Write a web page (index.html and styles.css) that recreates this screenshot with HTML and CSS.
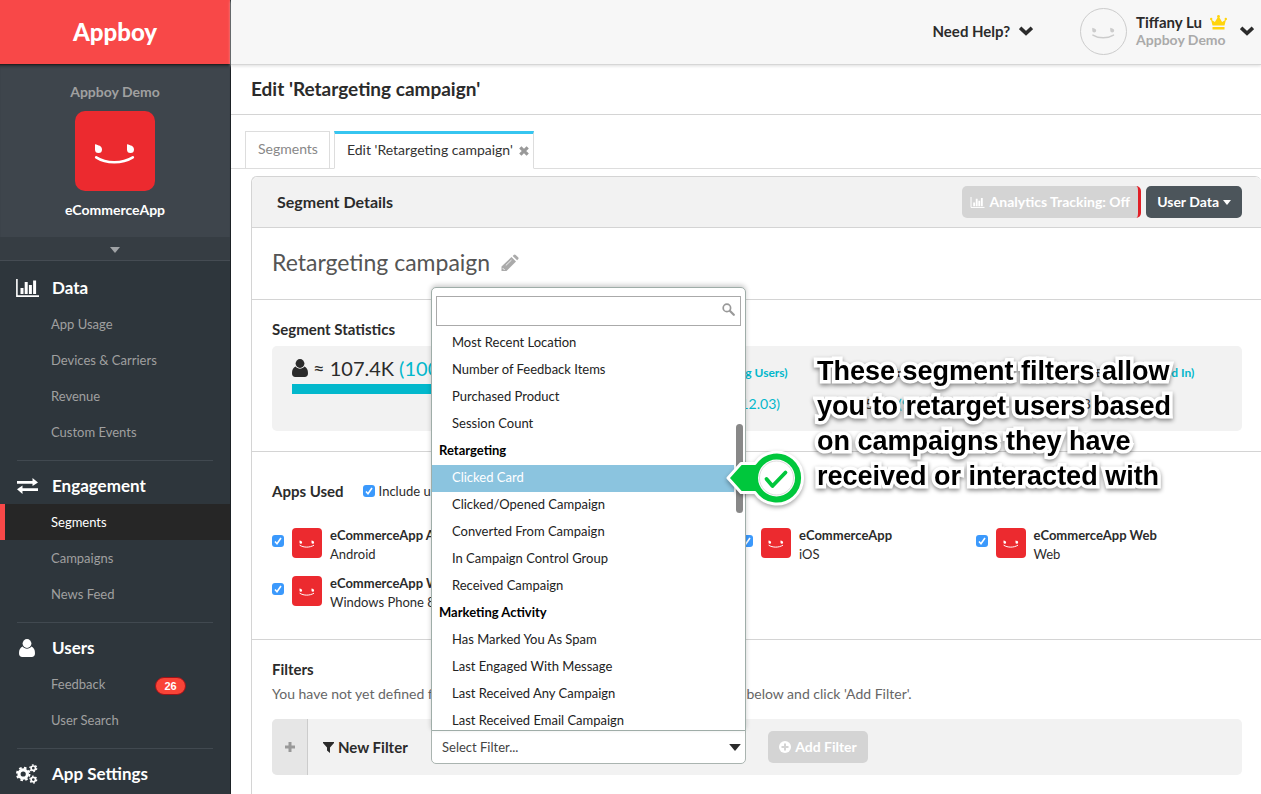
FILE: index.html
```html
<!DOCTYPE html>
<html lang="en">
<head>
<meta charset="utf-8">
<title>Edit 'Retargeting campaign'</title>
<link rel="stylesheet" href="styles.css">
</head>
<body>
<svg class="defs" aria-hidden="true">
  <symbol id="i-chart" viewBox="0 0 23 18"><path d="M.9 0v17.1H23" fill="none" stroke="currentColor" stroke-width="1.6"/><path d="M4.500 9h3v6h-3zM8.700 3h3v12h-3zM12.900 6h3v9h-3zM17.100 1.500h3V15h-3z" fill="currentColor"/></symbol>
  <symbol id="i-user" viewBox="0 0 16 18"><circle cx="8" cy="4.500" r="4.400" fill="currentColor"/><path d="M3.600 7.600C1.200 8.300 0 11 0 14.300 0 16.800 1.400 18 3.200 18h9.600c1.800 0 3.200-1.200 3.200-3.700 0-3.300-1.200-6-3.600-6.700C11.300 9 9.800 9.700 8 9.700S4.700 9 3.600 7.600z" fill="currentColor"/></symbol>
  <symbol id="i-face" viewBox="0 0 80 80"><path d="M20 33.200c3.500 1 7 1.600 7 5.200a3.500 3.500 0 0 1-7 0zM52 33.200c3.500 1 7 1.600 7 5.200a3.500 3.500 0 0 1-7 0z" fill="currentColor"/><path d="M21.200 46.300c10 6.500 26 6.500 36.600 0" fill="none" stroke="currentColor" stroke-width="2.600" stroke-linecap="round"/></symbol>
  <symbol id="i-chevron" viewBox="0 0 12 8"><path d="M1 1.300 6 6l5-4.700" fill="none" stroke="currentColor" stroke-width="3"/></symbol>
  <symbol id="i-caret" viewBox="0 0 10 6"><path d="M0 0h10L5 6z" fill="currentColor"/></symbol>
</svg>

<div class="page">
  <aside class="sidebar">
    <a class="brand" href="#">Appboy</a>
    <div class="org">
      <span class="org-name">Appboy Demo</span>
      <svg class="org-logo"><use href="#i-face"/></svg>
      <strong class="app-name">eCommerceApp</strong>
    </div>
    <button class="org-toggle" aria-label="Switch app"><svg><use href="#i-caret"/></svg></button>
    <nav class="nav">
      <section class="nav-group">
        <h2><svg width="23" height="18"><use href="#i-chart"/></svg>Data</h2>
        <a href="#">App Usage</a><a href="#">Devices &amp; Carriers</a><a href="#">Revenue</a><a href="#">Custom Events</a>
      </section>
      <section class="nav-group">
        <h2><svg width="21" height="16" viewBox="0 0 21 16"><path d="M0 3h15.500V0L21 4.500 15.500 8V5.800H0zM21 13H5.500v3L0 11.300 5.500 7.500v2.700H21z" fill="currentColor"/></svg>Engagement</h2>
        <a class="active" href="#">Segments</a><a href="#">Campaigns</a><a href="#">News Feed</a>
      </section>
      <section class="nav-group">
        <h2><svg width="16" height="18"><use href="#i-user"/></svg>Users</h2>
        <a href="#">Feedback <span class="badge">26</span></a><a href="#">User Search</a>
      </section>
      <section class="nav-group">
        <h2><svg width="22" height="20" viewBox="0 0 22 20"><g fill="none" stroke="currentColor"><circle cx="7.200" cy="10" r="4.200" stroke-width="3.200"/><circle cx="7.200" cy="10" r="6.300" stroke-width="1.900" stroke-dasharray="2.600 2.350"/><circle cx="17.300" cy="4.200" r="2.200" stroke-width="1.700"/><circle cx="17.300" cy="4.200" r="3.400" stroke-width="1.300" stroke-dasharray="1.700 1.860"/><circle cx="17.300" cy="15.600" r="2.200" stroke-width="1.700"/><circle cx="17.300" cy="15.600" r="3.400" stroke-width="1.300" stroke-dasharray="1.700 1.860"/></g></svg>App Settings</h2>
      </section>
    </nav>
  </aside>

  <div class="content">
    <header class="topbar">
      <button class="help">Need Help? <svg class="chevron"><use href="#i-chevron"/></svg></button>
      <button class="account">
        <svg class="avatar"><use href="#i-face"/></svg>
        <span class="who">
          <span class="who-name">Tiffany Lu <svg width="17" height="15" viewBox="0 0 17 15"><path d="M2.500 10.500 1 4.500l3.900 2.400L8.500 1l3.600 5.900L16 4.500l-1.500 6zM2.500 12h12v2.500h-12z" fill="currentColor"/><circle cx="1.200" cy="4" r="1.200" fill="currentColor"/><circle cx="8.500" cy="1.400" r="1.400" fill="currentColor"/><circle cx="15.800" cy="4" r="1.200" fill="currentColor"/></svg></span>
          <span class="who-org">Appboy Demo</span>
        </span>
        <svg class="chevron"><use href="#i-chevron"/></svg>
      </button>
    </header>
    <h1 class="title">Edit 'Retargeting campaign'</h1>

    <div class="tabs">
      <a class="tab" href="#">Segments</a>
      <a class="tab current" href="#">Edit 'Retargeting campaign' <svg width="10" height="10" viewBox="0 0 10 10"><path d="M1.300 1.300l7.400 7.400M8.700 1.300 1.300 8.700" stroke="currentColor" stroke-width="3.200"/></svg></a>
    </div>

    <main class="panel">
      <header class="panel-head">
        <h2>Segment Details</h2>
        <button class="btn muted tracking" disabled><svg width="15" height="11"><use href="#i-chart"/></svg>Analytics Tracking: Off</button>
        <button class="btn dark">User Data<svg width="8" height="5"><use href="#i-caret"/></svg></button>
      </header>

      <section class="segment-name">
        <span>Retargeting campaign</span>
        <button aria-label="Rename"><svg width="18" height="18" viewBox="0 0 18 18"><path d="M.5 12.500 10.500 3l4.500 4.500L5.500 17H.5zM11.700 1.900l1-1q1-1 2 0l2.400 2.400q1 1 0 2l-1 1z" fill="currentColor"/><path d="M4.800 11.500 10.500 6" stroke="#fff" stroke-width=".8"/><path d="M1.800 14.200l1.700 1.700" stroke="#fff" stroke-width="1"/></svg></button>
      </section>

      <section class="stats">
        <h3>Segment Statistics</h3>
        <div class="stats-box">
          <div class="total">
            <div class="total-line"><svg width="16" height="18"><use href="#i-user"/></svg>≈ 107.4K <em>(100%)</em></div>
            <div class="bar"></div>
          </div>
          <div class="stat"><b>Lifetime Revenue <em>(All Paying Users)</em></b><span>$1,024.1K <em>(Average $12.03)</em></span></div>
          <div class="stat"><b>Email</b><span>5.2K <em>(93.4%)</em></span></div>
          <div class="stat"><b>Web Push Enabled <em>(Opted In)</em></b><span>3K <em>(28.1%)</em></span></div>
        </div>
      </section>

      <section class="apps">
        <div class="apps-head">
          <h3>Apps Used</h3>
          <label><input type="checkbox" checked>Include users from all apps</label>
        </div>
        <div class="app-grid">
          <label class="app"><input type="checkbox" checked><svg><use href="#i-face"/></svg><span><b>eCommerceApp Android</b>Android</span></label>
          <label class="app"><input type="checkbox" checked><svg><use href="#i-face"/></svg><span><b>eCommerceApp</b>Kindle</span></label>
          <label class="app"><input type="checkbox" checked><svg><use href="#i-face"/></svg><span><b>eCommerceApp</b>iOS</span></label>
          <label class="app"><input type="checkbox" checked><svg><use href="#i-face"/></svg><span><b>eCommerceApp Web</b>Web</span></label>
          <label class="app"><input type="checkbox" checked><svg><use href="#i-face"/></svg><span><b>eCommerceApp Windows</b>Windows Phone 8</span></label>
        </div>
      </section>

      <section class="filters">
        <h3>Filters</h3>
        <p>You have not yet defined filters for this segment. Please pick a filter in the list below and click 'Add Filter'.</p>
        <div class="filter-row">
          <button class="plus" aria-label="Add group"><svg width="10" height="10" viewBox="0 0 10 10"><path d="M5 0v10M0 5h10" stroke="currentColor" stroke-width="3"/></svg></button>
          <label class="filter-label" for="filter"><svg width="11" height="11" viewBox="0 0 11 11"><path d="M0 0h11v1L7 5.500V11L4 8.500v-3L0 1z" fill="currentColor"/></svg>New Filter</label>
          <div class="picker">
            <select id="filter"><option>Select Filter...</option></select>
            <svg class="picker-caret"><use href="#i-caret"/></svg>
            <div class="menu">
              <div class="search">
                <input type="text" aria-label="Search filters">
                <svg width="13" height="13" viewBox="0 0 13 13"><circle cx="4.900" cy="4.900" r="3.700" fill="none" stroke="currentColor" stroke-width="1.700"/><path d="M7.800 7.800l4 4" stroke="currentColor" stroke-width="2.200" stroke-linecap="round"/></svg>
              </div>
              <ul class="options">
                <li>Most Recent Location</li>
                <li>Number of Feedback Items</li>
                <li>Purchased Product</li>
                <li>Session Count</li>
                <li class="group">Retargeting</li>
                <li class="hover">Clicked Card</li>
                <li>Clicked/Opened Campaign</li>
                <li>Converted From Campaign</li>
                <li>In Campaign Control Group</li>
                <li>Received Campaign</li>
                <li class="group">Marketing Activity</li>
                <li>Has Marked You As Spam</li>
                <li>Last Engaged With Message</li>
                <li>Last Received Any Campaign</li>
                <li>Last Received Email Campaign</li>
              </ul>
              <div class="thumb"></div>
              <div class="note">
                <svg width="84" height="64" viewBox="0 0 84 64"><path d="M5 32 18 17.500H32a26 26 0 1 1 0 29H18z" fill="#00c73c" stroke="#fff" stroke-width="3" stroke-linejoin="round"/><circle cx="53.500" cy="32" r="18.500" fill="#fff"/><circle cx="53.500" cy="32" r="17" fill="none" stroke="#ddd" stroke-width="1"/><path d="M43.500 33l6 7 13-13.500" fill="none" stroke="#00c73c" stroke-width="3.800" stroke-linecap="round" stroke-linejoin="round"/></svg>
                <p>These segment filters allow<br>you to retarget users based<br>on campaigns they have<br>received or interacted with</p>
              </div>
            </div>
          </div>
          <button class="btn muted add" disabled><svg width="12" height="12" viewBox="0 0 12 12"><circle cx="6" cy="6" r="6" fill="currentColor"/><path d="M6 2.500v7M2.500 6h7" stroke="#d4d4d4" stroke-width="2"/></svg>Add Filter</button>
        </div>
      </section>
    </main>
  </div>
</div>
</body>
</html>
```
FILE: styles.css
```css
* { box-sizing: border-box; }
body { margin: 0; font-family: Lato, "Open Sans", sans-serif; font-size: 14px; line-height: 20px; color: #2b2b2b; background: #fff; overflow: hidden; }
h1, h2, h3, p, ul { margin: 0; padding: 0; }
ul { list-style: none; }
a { color: inherit; text-decoration: none; }
em { font-style: normal; color: #02b8cc; }
button, input, select { font: inherit; color: inherit; }
button { border: 0; padding: 0; background: none; }
svg { flex: none; }
input[type="checkbox"] { width: 12px; height: 12px; margin: 0; flex: none; appearance: none; border-radius: 3px; background: #3b99fc; }
input[type="checkbox"]:checked { background: #3b99fc url("data:image/svg+xml,%3Csvg xmlns='http://www.w3.org/2000/svg' viewBox='0 0 12 12'%3E%3Cpath d='M3 6.500l2 2.300L9 3' fill='none' stroke='white' stroke-width='1.600'/%3E%3C/svg%3E"); }
.defs { position: absolute; width: 0; height: 0; }
.page { display: flex; min-height: 100vh; }

.sidebar { flex: none; width: 231px; height: 100vh; overflow: hidden; background: #2e363c; border-right: 1px solid #1d2226; color: #fff; }
.brand { display: flex; align-items: center; justify-content: center; height: 65px; background: #f84848; border-bottom: 1px solid #222; font-size: 24px; font-weight: 900; }
.org { display: flex; flex-direction: column; align-items: center; height: 172px; padding-top: 17px; background: #3e454c; box-shadow: inset 0 3px 3px -2px #23282c; }
.org-name { color: #a0a0a0; font-weight: 700; }
.org-logo { width: 80px; height: 80px; margin: 9px 0; background: #ec2a2f; border-radius: 10px; }
.app-name { font-weight: 700; }
.org-toggle { display: flex; align-items: center; justify-content: center; width: 100%; height: 24px; background: #363d43; border-bottom: 1px solid #454c53; color: #a0a3a6; }
.org-toggle svg { width: 10px; height: 6px; margin-top: 3px; }
.nav-group { padding: 9px 0 10px; position: relative; }
.nav-group + .nav-group { padding-top: 8px; }
.nav-group + .nav-group::before { content: ""; position: absolute; top: 0; left: 17px; right: 17px; height: 1px; background: #414950; }
.nav-group h2 { display: grid; grid-template-columns: 24px 1fr; gap: 13px; align-items: center; justify-items: start; height: 36px; padding-left: 15px; font-size: 17px; font-weight: 700; }
.nav-group h2 svg { justify-self: center; }
.nav-group a { display: flex; align-items: center; height: 36px; padding-left: 51px; font-size: 13px; color: #a0a0a0; }
.nav-group a.active { background: #262626; border-left: 5px solid #f84848; padding-left: 46px; color: #fff; }
.badge { margin: 4px 44px 0 auto; width: 31px; height: 18px; border: 1px solid #a01218; border-radius: 9px; background: #f94437; color: #fff; font: bold 11px/16px "Liberation Sans", sans-serif; text-align: center; }

.content { flex: 1; min-width: 0; display: flex; flex-direction: column; }
.topbar { display: flex; justify-content: flex-end; align-items: center; height: 65px; padding: 0 7px 2px 0; background: #f7f7f7; border-bottom: 1px solid #d6d6d6; box-shadow: 0 1px 3px #ddd; font-size: 15px; font-weight: 700; }
.help { display: flex; align-items: center; gap: 9px; margin-right: 47px; }
.chevron { width: 14px; height: 10px; }
.account { display: flex; align-items: center; gap: 9px; text-align: left; }
.avatar { width: 47px; height: 47px; border: 1px solid #ccc; border-radius: 50%; color: #ccc; }
.who { display: grid; margin-right: 4px; line-height: 18px; }
.who-name { display: flex; align-items: center; gap: 8px; }
.who-name svg { color: #ffd40c; }
.who-org { color: #aaa; font-size: 14px; }
.title { height: 50px; padding: 0 20px; border-bottom: 1px solid #d4d4d4; font-size: 19px; line-height: 47px; font-weight: 700; }
.tabs { display: flex; gap: 4px; margin-top: 16px; padding-left: 14px; height: 38px; border-bottom: 1px solid #ddd; }
.tab { display: flex; align-items: center; height: 38px; padding: 0 11px 2px 12px; border: 1px solid #ddd; color: #888; font-size: 14px; }
.tab.current { gap: 6px; padding: 0 4px 3px 12px; border-top: 3px solid #36c5f0; border-bottom-color: #fff; color: #333; background: #fff; }
.tab svg { color: #999; margin-top: 2px; }

.panel { flex: 1; margin: 7px 0 0 20px; border: 1px solid #d4d4d4; border-right: 0; border-radius: 6px 6px 0 0; }
.panel > section { padding: 19px 19px 20px 20px; border-bottom: 1px solid #d4d4d4; }
.panel-head { display: flex; align-items: center; gap: 5px; height: 51px; padding: 0 19px 0 25px; background: #f2f2f2; border-bottom: 1px solid #d4d4d4; border-radius: 6px 6px 0 0; }
.panel-head h2 { margin-right: auto; font-size: 16px; font-weight: 700; }
.btn { display: flex; align-items: center; justify-content: center; gap: 5px; height: 32px; padding: 0 11px; border-radius: 5px; font-size: 14px; font-weight: 700; color: #fff; }
.muted { background: #d4d4d4; }
.tracking { padding: 0 8px; border-right: 3px solid #e11f26; }
.dark { background: #4c555b; gap: 4px; }
.panel > .segment-name { display: flex; align-items: center; gap: 11px; height: 72px; padding-top: 16px; font-size: 23px; color: #555; }
.segment-name button { color: #aaa; height: 18px; }
h3 { font-size: 15px; line-height: 20px; font-weight: 700; }
.stats-box { display: grid; grid-template-columns: 14fr repeat(3, 10fr); margin-top: 7px; height: 85px; padding: 9px 20px; background: #f2f2f2; border-radius: 5px; }
.total-line { display: flex; align-items: center; gap: 5px; height: 26px; font-size: 20px; white-space: nowrap; }
.bar { height: 10px; margin-top: 3px; background: #02b8cc; }
.stat { display: grid; align-content: start; gap: 11px; padding-top: 8px; text-align: center; font-size: 14px; white-space: nowrap; }
.stat b { font-size: 12px; }
.panel > .apps { padding-top: 29px; padding-bottom: 25px; }
.apps-head { display: flex; align-items: center; gap: 19px; font-size: 13px; }
.apps-head label { display: flex; align-items: center; gap: 4px; }
.app-grid { display: grid; grid-template-columns: repeat(4, 1fr); gap: 8px 0; margin-top: 25px; padding-right: 32px; }
.app { display: flex; align-items: flex-start; height: 40px; gap: 8px; font-size: 13px; line-height: 19px; white-space: nowrap; }
.app input[type="checkbox"] { margin-top: 9px; }
.app svg { width: 30px; height: 30px; margin-top: 2px; background: #ec2a2f; border-radius: 4px; }
.app svg, .org-logo { color: #fff; }
.app b { display: block; }
.panel > .filters { border-bottom: 0; }
.filters p { margin-top: 5px; font-size: 14px; color: #666; white-space: nowrap; }
.filter-row { display: flex; align-items: center; height: 56px; margin-top: 15px; background: #f2f2f2; border-radius: 5px; }
.plus { display: flex; align-items: center; justify-content: center; width: 36px; height: 56px; background: #e6e6e6; border-right: 1px solid #ccc; border-radius: 5px 0 0 5px; color: #999; }
.filter-label { display: flex; align-items: center; gap: 4px; width: 123px; padding-left: 15px; font-size: 15px; font-weight: 700; white-space: nowrap; }
.picker { position: relative; width: 315px; height: 34px; }
.picker select { width: 100%; height: 34px; padding: 0 10px; appearance: none; border: 1px solid #aab4b0; border-radius: 0 0 5px 5px; background: #fff; color: #444; font-size: 13px; }
.picker-caret { position: absolute; right: 5px; top: 14px; width: 12px; height: 7px; }
.menu { position: absolute; z-index: 2; left: 0; bottom: 33px; width: 100%; height: 444px; padding: 8px 4px 0; background: #fff; border: 1px solid #9fada8; border-radius: 5px 5px 0 0; box-shadow: 0 -2px 5px rgba(0, 0, 0, .2); }
.search { position: relative; }
.search input { display: block; width: 100%; height: 30px; border: 1px solid #aaa; padding: 0 28px 0 6px; }
.search svg { position: absolute; right: 6px; top: 7px; color: #999; }
.options { height: 400px; margin: 4px 7px 0 -4px; overflow: hidden; color: #222; }
.options li { height: 27px; padding-left: 20px; font-size: 13px; line-height: 25px; white-space: nowrap; }
.options .group { padding-left: 7px; font-weight: 700; color: #000; }
.options .hover { background: #8bc4df; color: #fff; }
.thumb { position: absolute; right: 2px; top: 136px; width: 7px; height: 89px; border-radius: 4px; background: #888; }
.note { position: absolute; left: 291px; top: 66px; display: flex; align-items: flex-end; gap: 10px; }
.note svg { filter: drop-shadow(0 2px 2px rgba(0, 0, 0, .35)); margin-bottom: -16px; }
.filters .note p { margin: 0; font: bold 27px/35px "Liberation Sans", Arial, sans-serif; color: #000; -webkit-text-stroke: 7px #fff; paint-order: stroke fill; filter: drop-shadow(0 2px 2px rgba(0, 0, 0, .45)); }
.add { margin-left: 22px; width: 100px; gap: 4px; }
```
